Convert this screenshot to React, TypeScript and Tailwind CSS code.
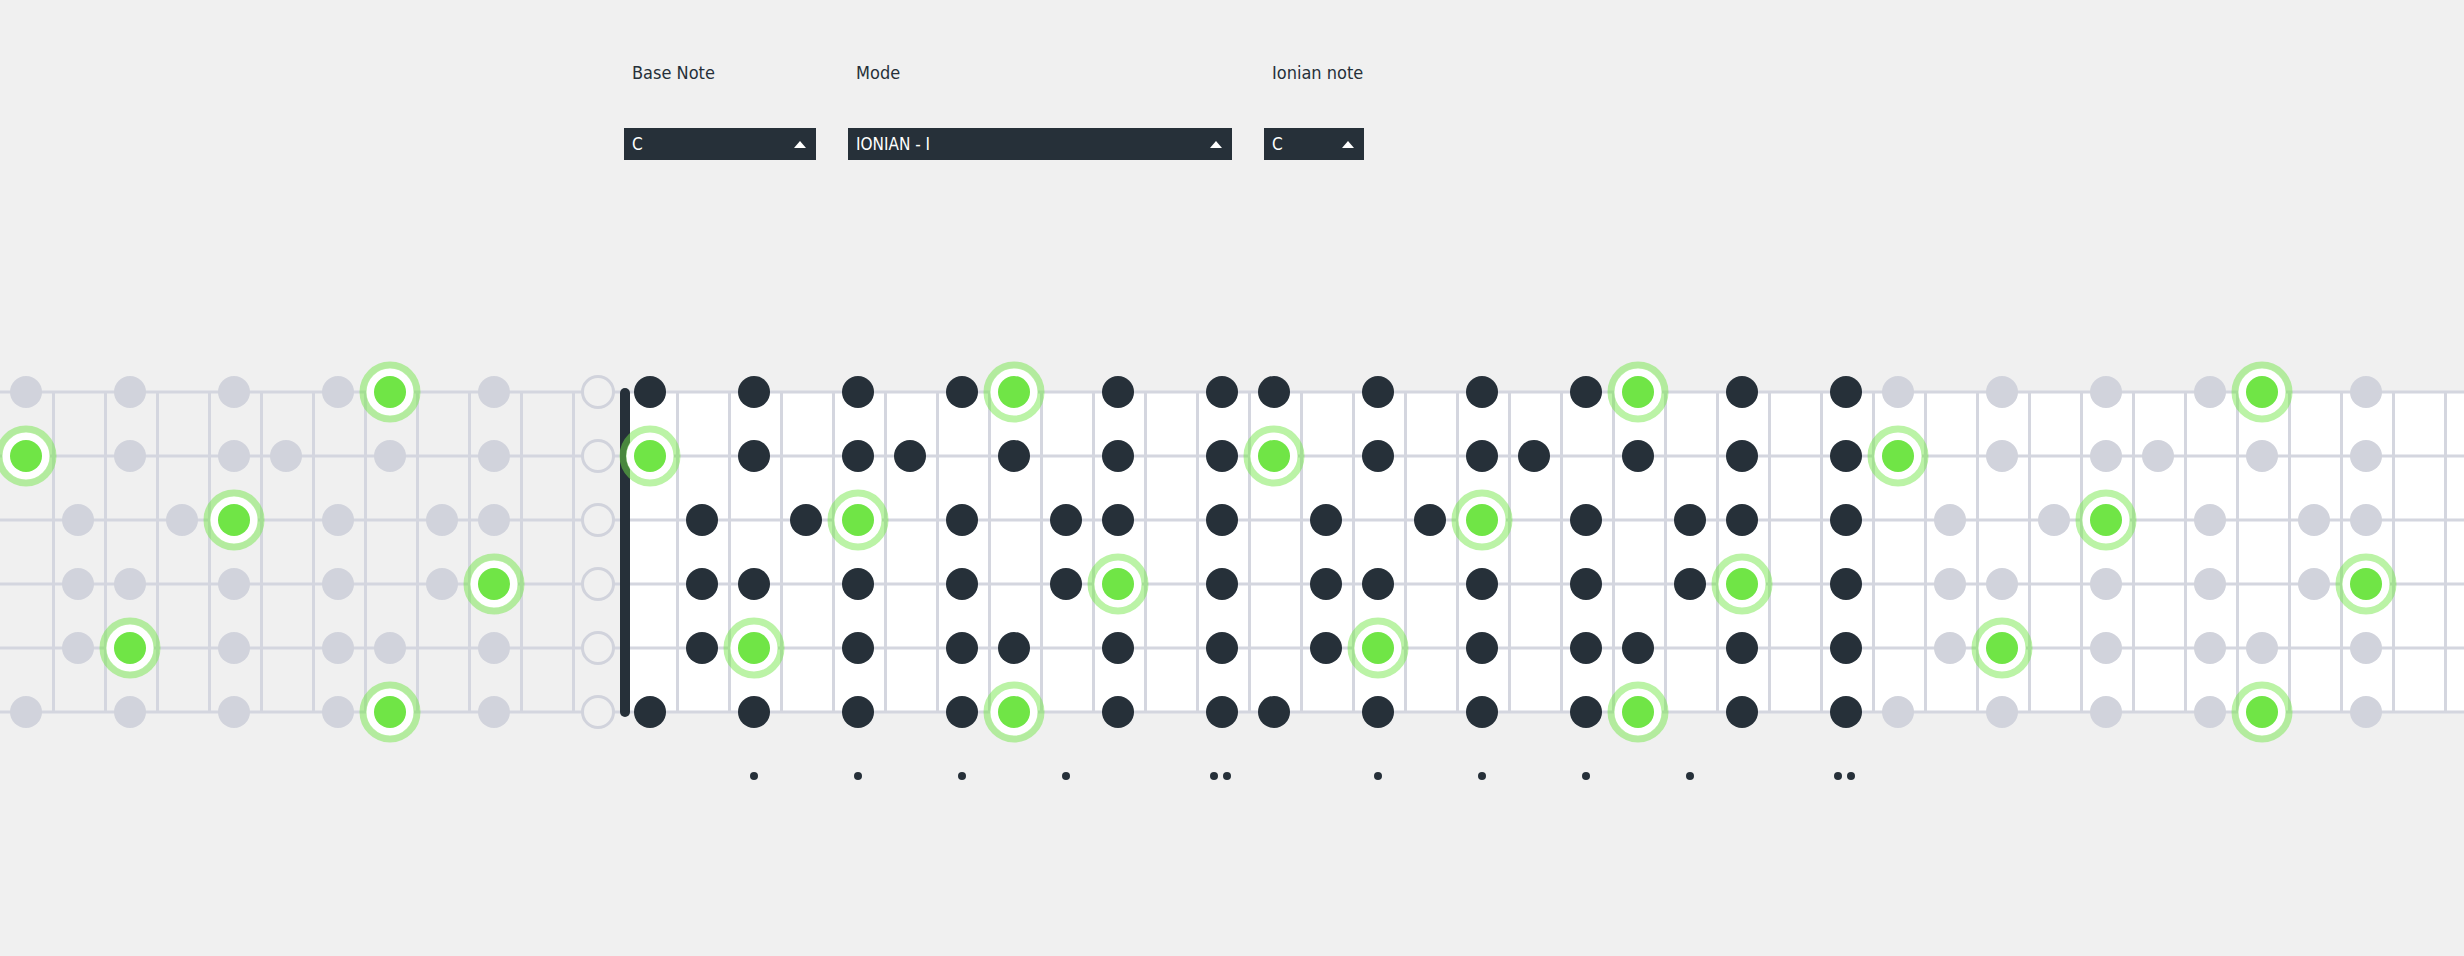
import React from 'react'

// strings top to bottom: high E, B, G, D, A, low E (semitones from C)
const OPEN = [4, 11, 7, 2, 9, 4]
const SCALE = [0, 2, 4, 5, 7, 9, 11]
const CELL = 52
const NUT_COL = 11
const COLS = 47
const LAST_FRET = 24
const rowY = (i: number) => 40 + i * 64
const colX = (k: number) => 26 + k * CELL

const MARKERS: Record<number, number> = { 3: 1, 5: 1, 7: 1, 9: 1, 12: 2, 15: 1, 17: 1, 19: 1, 21: 1, 24: 2 }

const DARK = '#263039'
const GRAY_DOT = '#d1d3dc'
const LINE = '#d4d6df'
const GREEN = '#70e546'

const Fretboard = () => {
  const frets: number[] = []
  for (let b = 1; b <= COLS; b++) {
    if (b !== NUT_COL + 1) frets.push(b * CELL + 1.5)
  }

  const dots: React.ReactNode[] = []
  const roots: React.ReactNode[] = []
  OPEN.forEach((open, s) => {
    for (let k = 0; k < COLS; k++) {
      const fret = k - NUT_COL
      const note = (((open + fret) % 12) + 12) % 12
      if (!SCALE.includes(note)) continue
      const cx = colX(k)
      const cy = rowY(s)
      if (note === 0) {
        roots.push(
          <g key={`r${s}-${k}`}>
            <circle cx={cx} cy={cy} r={24} fill="#fff" />
            <circle cx={cx} cy={cy} r={27} fill="none" stroke="rgba(112,229,70,0.48)" strokeWidth={7} />
            <circle cx={cx} cy={cy} r={16} fill={GREEN} />
          </g>
        )
      } else if (fret === 0) {
        dots.push(<circle key={`d${s}-${k}`} cx={cx} cy={cy} r={15.5} fill="#f0f0f0" stroke={GRAY_DOT} strokeWidth={3} />)
      } else {
        const inRange = fret >= 1 && fret <= LAST_FRET
        dots.push(<circle key={`d${s}-${k}`} cx={cx} cy={cy} r={16} fill={inRange ? DARK : GRAY_DOT} />)
      }
    }
  })

  return (
    <svg width={2464} height={440} className="block">
      <rect x={625} y={40} width={2464 - 625} height={320} fill="#fff" />
      {frets.map((x) => (
        <line key={x} x1={x} x2={x} y1={40} y2={360} stroke={LINE} strokeWidth={3} />
      ))}
      {OPEN.map((_, i) => (
        <line key={i} x1={0} x2={2464} y1={rowY(i)} y2={rowY(i)} stroke={LINE} strokeWidth={3} />
      ))}
      <rect x={620} y={36} width={10} height={329} rx={5} fill={DARK} />
      {dots}
      {roots}
      {Object.entries(MARKERS).map(([f, n]) => {
        const cx = colX(NUT_COL + Number(f))
        return n === 1 ? (
          <circle key={f} cx={cx} cy={424} r={4} fill={DARK} />
        ) : (
          <g key={f}>
            <circle cx={cx - 8} cy={424} r={4} fill={DARK} />
            <circle cx={cx + 5} cy={424} r={4} fill={DARK} />
          </g>
        )
      })}
    </svg>
  )
}

const Select = ({ label, value, className }: { label: string; value: string; className: string }) => (
  <div className={className}>
    <div className="mb-[43px] pl-2 text-[18px] leading-6 text-[#263039]">{label}</div>
    <div className="flex h-8 items-center justify-between bg-[#263039] pl-2 pr-[10px] text-[17px] leading-6 text-white">
      <span>{value}</span>
      <svg width="12" height="7" viewBox="0 0 12 7">
        <polygon points="6,0 12,7 0,7" fill="#fff" />
      </svg>
    </div>
  </div>
)

export default function App() {
  return (
    <div className="h-screen overflow-hidden bg-[#f0f0f0] pt-[61px] font-['DejaVu_Sans_Condensed','DejaVu_Sans',sans-serif] font-stretch-condensed">
      <div className="ml-[624px] flex gap-8">
        <Select label="Base Note" value="C" className="w-[192px]" />
        <Select label="Mode" value="IONIAN - I" className="w-[384px]" />
        <Select label="Ionian note" value="C" className="w-[100px]" />
      </div>
      <div className="mt-[192px]">
        <Fretboard />
      </div>
    </div>
  )
}
